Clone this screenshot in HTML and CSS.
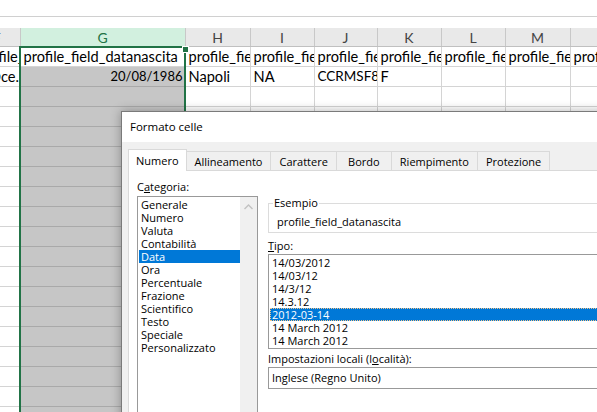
FILE: index.html
```html
<!DOCTYPE html>
<html lang="it">
<head>
  <meta charset="UTF-8">
  <meta name="viewport" content="width=device-width, initial-scale=1.0">
  <title>Formato celle</title>
  <link rel="stylesheet" href="styles.css">
</head>
<body>
  <div class="sheet">
    <div class="formula-bar"></div>
    <table class="grid">
      <colgroup>
        <col style="width:46px"><col style="width:165px"><col style="width:65px"><col style="width:64px">
        <col style="width:63px"><col style="width:64px"><col style="width:64px"><col style="width:65px"><col style="width:80px">
      </colgroup>
      <thead>
        <tr>
          <th>F</th><th class="col-sel">G</th><th>H</th><th>I</th><th>J</th><th>K</th><th>L</th><th>M</th><th>N</th>
        </tr>
      </thead>
      <tbody id="rows">
        <tr>
          <td>profile_field_email</td>
          <td class="active">profile_field_datanascita</td>
          <td>profile_field_luogo</td>
          <td>profile_field_prov</td>
          <td>profile_field_cf</td>
          <td>profile_field_sesso</td>
          <td>profile_field_tel</td>
          <td>profile_field_cell</td>
          <td>profile_field_note</td>
        </tr>
        <tr>
          <td>io@ce.it</td>
          <td class="g num">20/08/1986</td>
          <td>Napoli</td>
          <td>NA</td>
          <td class="code">CCRMSF86M20F839K</td>
          <td>F</td>
          <td></td><td></td><td></td>
        </tr>
      </tbody>
    </table>
    <!-- bordo verde della colonna selezionata -->
    <div class="sel-box"></div>
    <div class="fill-handle"></div>
  </div>

  <!-- Finestra Formato celle -->
  <div class="dialog">
    <div class="dialog-title">Formato celle</div>
    <div class="dialog-body">
      <div class="tabs">
        <div class="tab active">Numero</div>
        <div class="tab">Allineamento</div>
        <div class="tab">Carattere</div>
        <div class="tab tab-short">Bordo</div>
        <div class="tab">Riempimento</div>
        <div class="tab">Protezione</div>
      </div>
      <div class="panel">
        <div class="category">
          <div class="label">C<u>a</u>tegoria:</div>
          <div class="listbox cat-list">
            <div class="items">
              <div class="item">Generale</div>
              <div class="item">Numero</div>
              <div class="item">Valuta</div>
              <div class="item">Contabilità</div>
              <div class="item selected">Data</div>
              <div class="item">Ora</div>
              <div class="item">Percentuale</div>
              <div class="item">Frazione</div>
              <div class="item">Scientifico</div>
              <div class="item">Testo</div>
              <div class="item">Speciale</div>
              <div class="item">Personalizzato</div>
            </div>
            <div class="scrollbar">
              <svg width="9" height="6" viewBox="0 0 9 6"><polyline points="0.5,5 4.5,1 8.5,5" fill="none" stroke="#c2c2c2" stroke-width="1.4"/></svg>
            </div>
          </div>
        </div>
        <div class="options">
          <fieldset class="sample">
            <legend>Esempio</legend>
            profile_field_datanascita
          </fieldset>
          <div class="label tipo-label"><u>T</u>ipo:</div>
          <div class="listbox type-list">
            <div class="item">14/03/2012</div>
            <div class="item">14/03/12</div>
            <div class="item">14/3/12</div>
            <div class="item">14.3.12</div>
            <div class="item selected focus">2012-03-14</div>
            <div class="item">14 March 2012</div>
            <div class="item">14 March 2012</div>
          </div>
          <div class="label locale-label">Impostazioni locali (l<u>o</u>calità):</div>
          <div class="combo">Inglese (Regno Unito)</div>
        </div>
      </div>
    </div>
  </div>

  <script>
    // righe vuote del foglio
    var rows = document.getElementById('rows');
    for (var r = 0; r < 17; r++) {
      var tr = document.createElement('tr');
      for (var c = 0; c < 9; c++) {
        var td = document.createElement('td');
        if (c == 1) td.className = 'g';
        tr.appendChild(td);
      }
      rows.appendChild(tr);
    }
  </script>
</body>
</html>
```

FILE: styles.css
```css
/* Foglio */
body {
  margin: 0;
  width: 597px;
  height: 412px;
  overflow: hidden;
  position: relative;
  background: #fff;
  font-family: Lato, "Liberation Sans", sans-serif;
}
.formula-bar {
  height: 16px;
  border-bottom: 1px solid #d0d0d0;
  margin-bottom: 11px;
}
.grid {
  border-collapse: collapse;
  table-layout: fixed;
  width: 676px;
  margin-left: -26px;
}
.grid th {
  height: 18px;
  padding: 0;
  background: #e9e9e9;
  color: #444;
  font-weight: normal;
  font-size: 14px;
  border-right: 1px solid #c8c8c8;
  border-bottom: 1px solid #c0c0c0;
}
.grid th.col-sel {
  background: #d2f0df;
  color: #217346;
}
.grid td {
  height: 19px;
  padding: 0 3px;
  font-size: 14.6px;
  line-height: 19px;
  color: #000;
  white-space: nowrap;
  overflow: hidden;
  border-right: 1px solid #d4d4d4;
  border-bottom: 1px solid #d4d4d4;
}
.grid td.g {
  background: #c6c6c6;
  border-bottom-color: #a9a9a9;
}
.grid td.num {
  text-align: right;
  padding-right: 2px;
  font-size: 13px;
}
.grid td.code {
  font-size: 13.5px;
}
.sel-box {
  position: absolute;
  left: 19px;
  top: 46px;
  width: 163px;
  height: 400px;
  border: 2px solid #217346;
}
.fill-handle {
  position: absolute;
  left: 182px;
  top: 46px;
  width: 5px;
  height: 5px;
  background: #217346;
  border: 1px solid #fff;
}

/* Dialog */
.dialog {
  position: absolute;
  left: 121px;
  top: 111px;
  width: 560px;
  height: 360px;
  border: 1px solid #7a7a7a;
  background: #f0f0f0;
  box-shadow: 0 0 10px rgba(0,0,0,0.3);
  font-family: "Open Sans", sans-serif;
  font-size: 11px;
  color: #000;
}
.dialog-title {
  background: #fff;
  height: 30px;
  line-height: 30px;
  padding-left: 8px;
  font-size: 11.5px;
}
.dialog-body {
  padding: 7px 0 0 6px;
}
.tabs {
  display: flex;
  align-items: flex-end;
}
.tab {
  height: 18px;
  line-height: 20px;
  padding: 0 8px;
  border: 1px solid #d9d9d9;
  border-bottom: none;
  margin-right: -1px;
  background: #f0f0f0;
}
.tab-short {
  min-width: 38px;
  text-align: center;
}
.tab.active {
  height: 21px;
  line-height: 22px;
  padding: 0 7px;
  background: #fff;
  position: relative;
  z-index: 1;
  margin-bottom: -1px;
}
.panel {
  display: flex;
  gap: 10px;
  height: 300px;
  padding: 9px 0 0 8px;
  background: #fff;
  border: 1px solid #d9d9d9;
}
.label {
  line-height: 13px;
  margin-bottom: 3px;
}
.category {
  width: 121px;
}
.listbox {
  border: 1px solid #999;
  padding: 1px 0;
  background: #fff;
}
.item {
  line-height: 13px;
  padding-left: 2px;
  white-space: nowrap;
}
.item.selected {
  background: #0078d7;
  color: #fff;
}
.cat-list {
  display: flex;
  height: 230px;
  padding: 0;
}
.cat-list .items {
  flex: 1;
  padding: 1px 0 0 1px;
}
.scrollbar {
  width: 17px;
  background: #f0f0f0;
  text-align: center;
  padding-top: 7px;
}
.scrollbar svg {
  display: block;
  margin: 0 auto;
}
.options {
  width: 380px;
  padding-top: 16px;
}
.sample {
  margin: 0;
  min-width: 0;
  padding: 5px 8px 3px;
  border: 1px solid #dcdcdc;
  line-height: 14px;
}
.sample legend {
  padding: 0 1px;
  margin-left: -4px;
  line-height: 14px;
}
.tipo-label {
  margin-top: 6px;
  margin-bottom: 2px;
}
.type-list .item {
  margin: 0 1px;
}
.item.focus {
  outline: 1px dotted #f4c48a;
  outline-offset: -1px;
}
.locale-label {
  margin-top: 3px;
  margin-bottom: 2px;
}
.combo {
  height: 20px;
  line-height: 20px;
  padding-left: 3px;
  border: 1px solid #999;
}
```
